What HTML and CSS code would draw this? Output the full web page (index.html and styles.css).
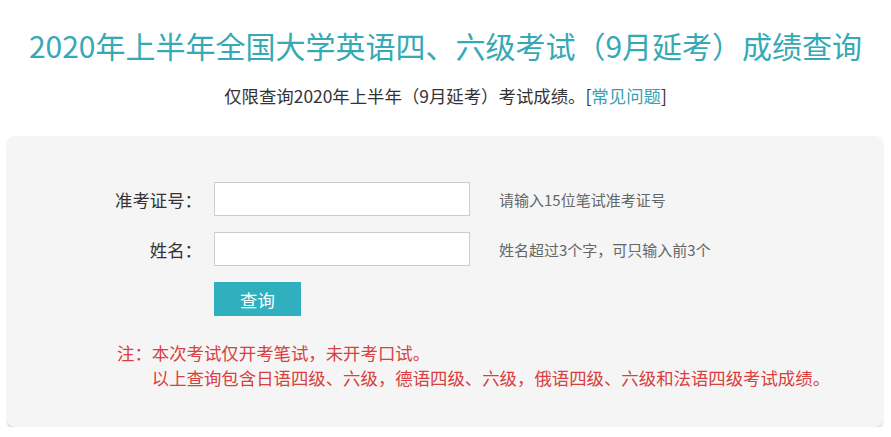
FILE: index.html
```html
<!DOCTYPE html>
<html>
<head>
    <meta charset="UTF-8">
    <title>2020年上半年全国大学英语四、六级考试（9月延考）成绩查询</title>
    <link rel="stylesheet" href="styles.css">
</head>
<body>
    <h1 class="title">2020年上半年全国大学英语四、六级考试（9月延考）成绩查询</h1>
    <p class="subtitle">仅限查询2020年上半年（9月延考）考试成绩。[<a href="#" class="faq">常见问题</a>]</p>

    <div class="card">
        <form class="query-form">
            <div class="form-row">
                <label for="zkzh">准考证号：</label>
                <input type="text" id="zkzh">
                <span class="hint">请输入15位笔试准考证号</span>
            </div>
            <div class="form-row">
                <label for="xm">姓名：</label>
                <input type="text" id="xm">
                <span class="hint">姓名超过3个字，可只输入前3个</span>
            </div>
            <div class="form-row">
                <span></span>
                <button type="button" class="submit-btn">查询</button>
            </div>
        </form>

        <div class="note">
            <span class="note-label">注：</span>
            <div class="note-lines">
                <p>本次考试仅开考笔试，未开考口试。</p>
                <p>以上查询包含日语四级、六级，德语四级、六级，俄语四级、六级和法语四级考试成绩。</p>
            </div>
        </div>
    </div>
</body>
</html>
```

FILE: styles.css
```css
body {
    margin: 0;
    font-family: "Noto Sans CJK SC", "Noto Sans", sans-serif;
    font-size: 17.4px;
    color: #333;
    background: #fff;
}

.title {
    margin: 24px 0 0 0;
    font-size: 30px;
    font-weight: normal;
    line-height: 42px;
    text-align: center;
    color: #35a9b5;
}

.subtitle {
    margin: 17px 0 0 0;
    line-height: 26px;
    text-align: center;
    color: #333;
}

.faq {
    color: #3a9fb0;
    text-decoration: none;
}

.card {
    margin: 27px 8px 0 7px;
    padding: 46px 0 37px 0;
    background: #f5f5f5;
    border-radius: 8px;
    box-shadow: 0 3px 2px #dcdcdc;
}

.query-form {
    display: flex;
    flex-direction: column;
    gap: 16px;
}

.form-row {
    display: grid;
    grid-template-columns: 195px 256px auto;
    column-gap: 12px;
    align-items: center;
    height: 34px;
}

.form-row label {
    text-align: right;
    color: #333;
}

.form-row input {
    box-sizing: border-box;
    width: 256px;
    height: 34px;
    margin: 0;
    padding: 0 8px;
    border: 1px solid #ccc;
    background: #fff;
    font-family: inherit;
    font-size: 15px;
    outline: none;
}

.hint {
    margin-left: 17px;
    font-size: 15px;
    color: #666;
}

.submit-btn {
    width: 87px;
    height: 34px;
    border: none;
    background: #30b0be;
    color: #fff;
    font-family: inherit;
    font-size: 17.4px;
    cursor: pointer;
    padding: 0;
}

.note {
    display: flex;
    margin-top: 24px;
    padding-left: 110px;
    color: #d9403f;
    line-height: 25px;
}

.note-lines p {
    margin: 0;
}
```
